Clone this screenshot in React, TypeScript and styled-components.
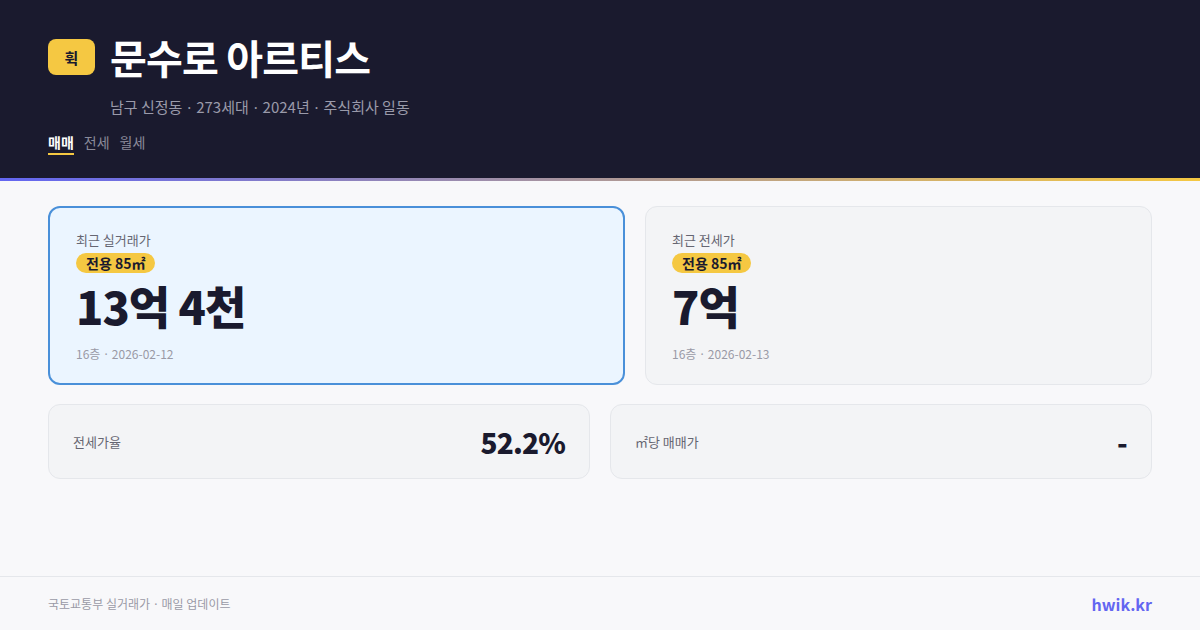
import React from "react";
import styled, { createGlobalStyle } from "styled-components";

const GlobalStyle = createGlobalStyle`
  * { box-sizing: border-box; }
  html, body { margin: 0; padding: 0; }
  body {
    font-family: "Noto Sans CJK KR", "Noto Sans", sans-serif;
    background: #f8f8fa;
    color: #1a1a2e;
  }
`;

const Page = styled.div`
  width: 1200px;
  height: 630px;
  display: flex;
  flex-direction: column;
  background: #f8f8fa;
`;

const Header = styled.header`
  background: #1a1a2e;
  padding: 33px 48px 23px;
  border-bottom: 3px solid transparent;
  border-image: linear-gradient(90deg, #6366f1, #f5c842) 1;
`;

const TitleRow = styled.div`
  display: flex;
  align-items: center;
  gap: 15px;
`;

const Logo = styled.div`
  width: 47px;
  height: 36px;
  border-radius: 8px;
  background: #f5c842;
  color: #1a1a2e;
  font-size: 15px;
  font-weight: 700;
  display: flex;
  align-items: center;
  justify-content: center;
`;

const Title = styled.h1`
  margin: 0;
  color: #ffffff;
  font-size: 40px;
  font-weight: 700;
  line-height: 48px;
  letter-spacing: -0.8px;
`;

const Sub = styled.div`
  margin: 17px 0 0 62px;
  color: #9a9aaa;
  font-size: 15px;
  line-height: 18px;
`;

const Sep = styled.span`
  font-family: "Noto Sans", sans-serif;
  margin: 0 1px;
`;

const Tabs = styled.div`
  display: flex;
  gap: 10px;
  margin-top: 17px;
`;

const Tab = styled.span<{ $active?: boolean }>`
  font-size: 14px;
  line-height: 18px;
  padding-bottom: 2px;
  font-weight: ${(p) => (p.$active ? 700 : 400)};
  color: ${(p) => (p.$active ? "#ffffff" : "#8a8a9a")};
  border-bottom: 2px solid ${(p) => (p.$active ? "#f5c842" : "transparent")};
`;

const Main = styled.main`
  flex: 1;
  padding: 25px 48px 0;
`;

const TopGrid = styled.div`
  display: grid;
  grid-template-columns: 577px 1fr;
  gap: 20px;
`;

const PriceCard = styled.div<{ $highlight?: boolean }>`
  height: 179px;
  border-radius: 12px;
  background: ${(p) => (p.$highlight ? "#ebf5ff" : "#f3f4f6")};
  border: ${(p) => (p.$highlight ? "2px solid #4a90d9" : "1px solid #e5e7eb")};
  padding: ${(p) => (p.$highlight ? "23px 26px" : "24px 26px")};
  display: flex;
  flex-direction: column;
  align-items: flex-start;
`;

const Label = styled.div`
  font-size: 13px;
  line-height: 18px;
  color: #666672;
`;

const Pill = styled.span`
  margin-top: 4px;
  height: 24px;
  padding: 0 10px;
  border-radius: 12px;
  background: #f5c842;
  color: #1a1a2e;
  font-size: 14px;
  font-weight: 700;
  display: inline-flex;
  align-items: center;
`;

const BigValue = styled.div`
  margin-top: 5px;
  font-size: 45px;
  font-weight: 900;
  line-height: 56px;
  letter-spacing: -1px;
  color: #1a1a2e;
`;

const Meta = styled.div`
  margin-top: 12px;
  font-size: 12px;
  line-height: 16px;
  color: #9a9aa6;
`;

const BottomGrid = styled.div`
  display: grid;
  grid-template-columns: 1fr 1fr;
  gap: 20px;
  margin-top: 19px;
`;

const StatCard = styled.div`
  height: 75px;
  border-radius: 12px;
  background: #f3f4f6;
  border: 1px solid #e5e7eb;
  padding: 0 24px;
  display: flex;
  align-items: center;
  justify-content: space-between;
`;

const StatValue = styled.div`
  font-size: 28px;
  font-weight: 800;
  letter-spacing: -0.8px;
  color: #1a1a2e;
`;

const Footer = styled.footer`
  height: 54px;
  border-top: 1px solid #e5e7eb;
  padding: 0 48px;
  display: flex;
  align-items: center;
  justify-content: space-between;
`;

const FootNote = styled.span`
  font-size: 12px;
  color: #9a9aa6;
`;

const Brand = styled.span`
  font-size: 16px;
  font-weight: 700;
  color: #6366f1;
`;

const info = ["남구 신정동", "273세대", "2024년", "주식회사 일동"];

export default function App() {
  return (
    <Page>
      <GlobalStyle />
      <Header>
        <TitleRow>
          <Logo>휙</Logo>
          <Title>문수로 아르티스</Title>
        </TitleRow>
        <Sub>
          {info.map((item, i) => (
            <React.Fragment key={item}>
              {i > 0 && <Sep> · </Sep>}
              {item}
            </React.Fragment>
          ))}
        </Sub>
        <Tabs>
          <Tab $active>매매</Tab>
          <Tab>전세</Tab>
          <Tab>월세</Tab>
        </Tabs>
      </Header>
      <Main>
        <TopGrid>
          <PriceCard $highlight>
            <Label>최근 실거래가</Label>
            <Pill>전용 85㎡</Pill>
            <BigValue>13억 4천</BigValue>
            <Meta>16층<Sep> · </Sep>2026-02-12</Meta>
          </PriceCard>
          <PriceCard>
            <Label>최근 전세가</Label>
            <Pill>전용 85㎡</Pill>
            <BigValue>7억</BigValue>
            <Meta>16층<Sep> · </Sep>2026-02-13</Meta>
          </PriceCard>
        </TopGrid>
        <BottomGrid>
          <StatCard>
            <Label>전세가율</Label>
            <StatValue>52.2%</StatValue>
          </StatCard>
          <StatCard>
            <Label>㎡당 매매가</Label>
            <StatValue>-</StatValue>
          </StatCard>
        </BottomGrid>
      </Main>
      <Footer>
        <FootNote>국토교통부 실거래가<Sep> · </Sep>매일 업데이트</FootNote>
        <Brand>hwik.kr</Brand>
      </Footer>
    </Page>
  );
}
